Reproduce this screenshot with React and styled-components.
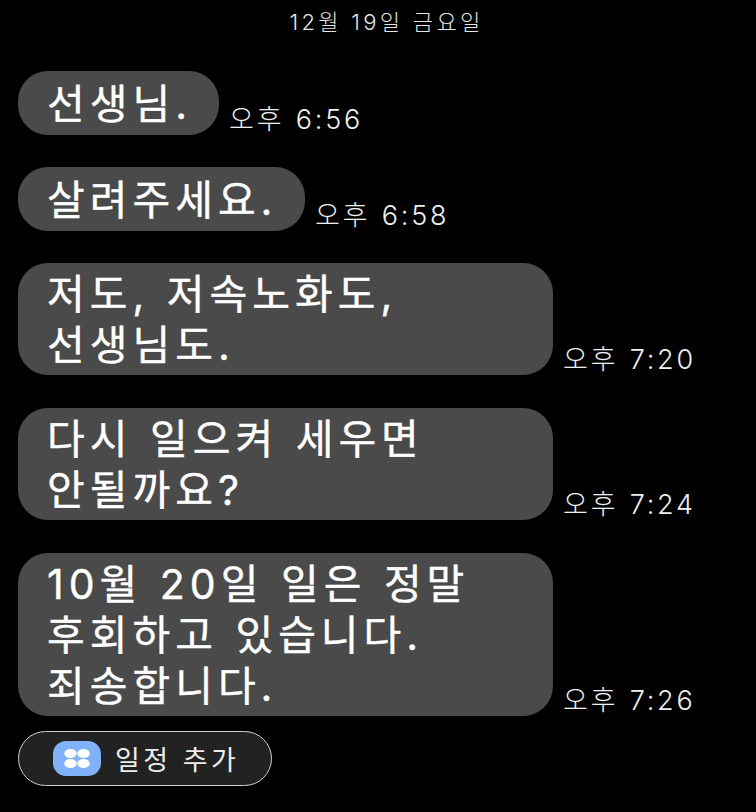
import React from 'react';
import styled, { createGlobalStyle } from 'styled-components';

const GlobalStyle = createGlobalStyle`
  html, body {
    margin: 0;
    padding: 0;
    background: #000;
  }
`;

const Screen = styled.div`
  width: 756px;
  height: 812px;
  box-sizing: border-box;
  overflow: hidden;
  padding: 8px 18px 0;
  background: #000;
  color: #fff;
  font-family: Inter, "Noto Sans CJK KR", "Noto Sans", sans-serif;
`;

const DateLine = styled.div`
  padding-left: 17px;
  margin: 0 -18px;
  text-align: center;
  font-size: 22px;
  line-height: 28px;
  letter-spacing: 3.3px;
  font-weight: 300;
  color: #e4e4e4;
`;

const Thread = styled.div`
  display: flex;
  flex-direction: column;
  margin-top: 35px;
`;

const Row = styled.div`
  display: flex;
  align-items: flex-end;
  gap: 10px;
  margin-bottom: ${(p) => p.$after}px;
`;

const Bubble = styled.div`
  display: flex;
  align-items: center;
  width: ${(p) => p.$width}px;
  min-height: 64px;
  box-sizing: border-box;
  padding: 6px 0 4px 29px;
  border-radius: 30px;
  background: #4a4a4a;
  font-size: 41px;
  line-height: 51px;
  letter-spacing: 5px;
  word-spacing: 1px;
  font-weight: 400;
  -webkit-text-stroke: 0.4px #fff;
  white-space: pre;
`;

const Time = styled.span`
  font-size: 27px;
  line-height: 30px;
  letter-spacing: 2.8px;
  word-spacing: 1px;
  font-weight: 300;
  color: #f0f0f0;
  white-space: nowrap;
`;

const AddButton = styled.div`
  display: flex;
  align-items: center;
  gap: 14px;
  width: 254px;
  height: 55px;
  box-sizing: border-box;
  margin-top: 15px;
  padding-left: 34px;
  border: 1px solid #cfcfcf;
  border-radius: 28px;
  background: #222;
  font-size: 27px;
  letter-spacing: 3.5px;
  font-weight: 400;
  color: #ececec;
`;

const messages = [
  { text: '선생님.', time: '오후 6:56', width: 201, after: 32 },
  { text: '살려주세요.', time: '오후 6:58', width: 287, after: 32 },
  { text: '저도, 저속노화도,\n선생님도.', time: '오후 7:20', width: 535, after: 33 },
  { text: '다시 일으켜 세우면\n안될까요?', time: '오후 7:24', width: 535, after: 33 },
  { text: '10월 20일 일은 정말\n후회하고 있습니다.\n죄송합니다.', time: '오후 7:26', width: 535, after: 0 },
];

function AppsIcon() {
  return (
    <svg width="48" height="35" viewBox="0 0 48 35" style={{ flexShrink: 0 }}>
      <rect width="48" height="35" rx="13" fill="#7fb2f8" />
      <ellipse cx="17.5" cy="12.5" rx="6.2" ry="4.6" fill="#fff" />
      <ellipse cx="30.5" cy="12.5" rx="6.2" ry="4.6" fill="#fff" />
      <ellipse cx="17.5" cy="22.5" rx="6.2" ry="4.6" fill="#fff" />
      <ellipse cx="30.5" cy="22.5" rx="6.2" ry="4.6" fill="#fff" />
    </svg>
  );
}

export default function App() {
  return (
    <Screen>
      <GlobalStyle />
      <DateLine>12월 19일 금요일</DateLine>
      <Thread>
        {messages.map((m) => (
          <Row key={m.time} $after={m.after}>
            <Bubble $width={m.width}>{m.text}</Bubble>
            <Time>{m.time}</Time>
          </Row>
        ))}
      </Thread>
      <AddButton>
        <AppsIcon />
        일정 추가
      </AddButton>
    </Screen>
  );
}
